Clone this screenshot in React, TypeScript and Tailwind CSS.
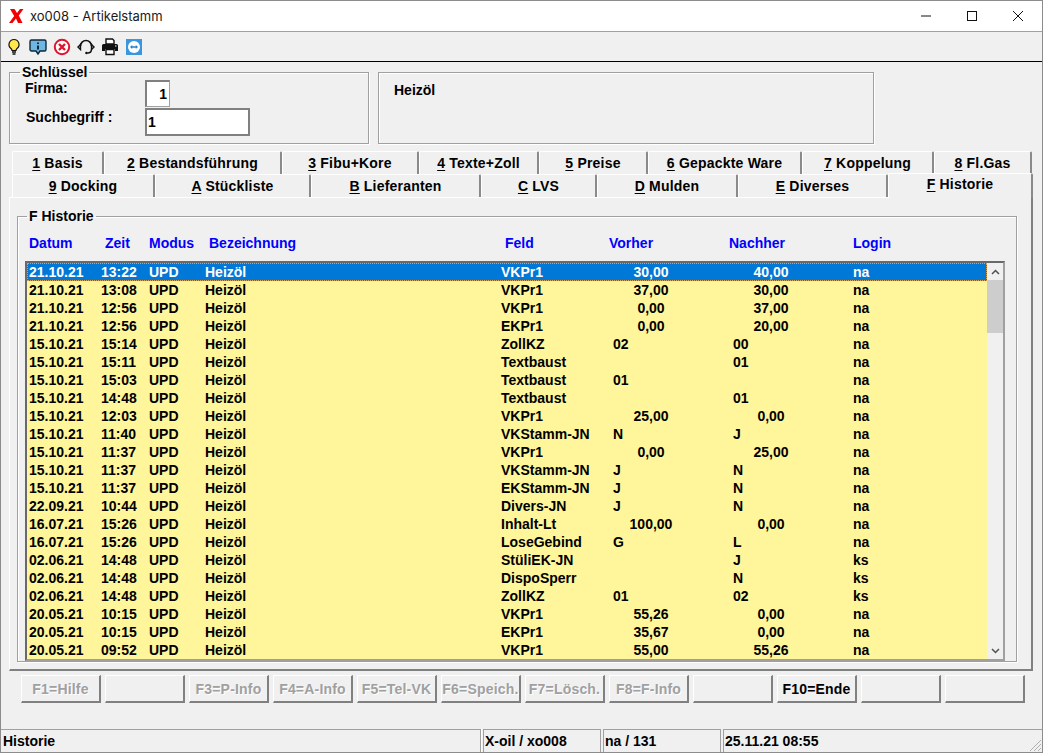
const rows = [
  ['21.10.21', '13:22', 'UPD', 'Heizöl', 'VKPr1', '30,00', '40,00', 'na'],
  ['21.10.21', '13:08', 'UPD', 'Heizöl', 'VKPr1', '37,00', '30,00', 'na'],
  ['21.10.21', '12:56', 'UPD', 'Heizöl', 'VKPr1', '0,00', '37,00', 'na'],
  ['21.10.21', '12:56', 'UPD', 'Heizöl', 'EKPr1', '0,00', '20,00', 'na'],
  ['15.10.21', '15:14', 'UPD', 'Heizöl', 'ZollKZ', '02', '00', 'na'],
  ['15.10.21', '15:11', 'UPD', 'Heizöl', 'Textbaust', '', '01', 'na'],
  ['15.10.21', '15:03', 'UPD', 'Heizöl', 'Textbaust', '01', '', 'na'],
  ['15.10.21', '14:48', 'UPD', 'Heizöl', 'Textbaust', '', '01', 'na'],
  ['15.10.21', '12:03', 'UPD', 'Heizöl', 'VKPr1', '25,00', '0,00', 'na'],
  ['15.10.21', '11:40', 'UPD', 'Heizöl', 'VKStamm-JN', 'N', 'J', 'na'],
  ['15.10.21', '11:37', 'UPD', 'Heizöl', 'VKPr1', '0,00', '25,00', 'na'],
  ['15.10.21', '11:37', 'UPD', 'Heizöl', 'VKStamm-JN', 'J', 'N', 'na'],
  ['15.10.21', '11:37', 'UPD', 'Heizöl', 'EKStamm-JN', 'J', 'N', 'na'],
  ['22.09.21', '10:44', 'UPD', 'Heizöl', 'Divers-JN', 'J', 'N', 'na'],
  ['16.07.21', '15:26', 'UPD', 'Heizöl', 'Inhalt-Lt', '100,00', '0,00', 'na'],
  ['16.07.21', '15:26', 'UPD', 'Heizöl', 'LoseGebind', 'G', 'L', 'na'],
  ['02.06.21', '14:48', 'UPD', 'Heizöl', 'StüliEK-JN', '', 'J', 'ks'],
  ['02.06.21', '14:48', 'UPD', 'Heizöl', 'DispoSperr', '', 'N', 'ks'],
  ['02.06.21', '14:48', 'UPD', 'Heizöl', 'ZollKZ', '01', '02', 'ks'],
  ['20.05.21', '10:15', 'UPD', 'Heizöl', 'VKPr1', '55,26', '0,00', 'na'],
  ['20.05.21', '10:15', 'UPD', 'Heizöl', 'EKPr1', '35,67', '0,00', 'na'],
  ['20.05.21', '09:52', 'UPD', 'Heizöl', 'VKPr1', '55,00', '55,26', 'na'],
];

const tabsTop = [
  { key: '1', label: 'Basis', w: 'w-[92px]' },
  { key: '2', label: 'Bestandsführung', w: 'w-[178px]' },
  { key: '3', label: 'Fibu+Kore', w: 'w-[137px]' },
  { key: '4', label: 'Texte+Zoll', w: 'w-[120px]' },
  { key: '5', label: 'Preise', w: 'w-[109px]' },
  { key: '6', label: 'Gepackte Ware', w: 'w-[154px]' },
  { key: '7', label: 'Koppelung', w: 'w-[132px]' },
  { key: '8', label: 'Fl.Gas', w: 'w-[98px]' },
];

const tabsBottom = [
  { key: '9', label: 'Docking', w: 'w-[143px]' },
  { key: 'A', label: 'Stückliste', w: 'w-[156px]' },
  { key: 'B', label: 'Lieferanten', w: 'w-[170px]' },
  { key: 'C', label: 'LVS', w: 'w-[116px]' },
  { key: 'D', label: 'Mulden', w: 'w-[141px]' },
  { key: 'E', label: 'Diverses', w: 'w-[150px]' },
];

const buttons = [
  { label: 'F1=Hilfe' },
  { label: '' },
  { label: 'F3=P-Info' },
  { label: 'F4=A-Info' },
  { label: 'F5=Tel-VK' },
  { label: 'F6=Speich.' },
  { label: 'F7=Lösch.' },
  { label: 'F8=F-Info' },
  { label: '' },
  { label: 'F10=Ende', active: true },
  { label: '' },
  { label: '' },
];

function Tab({ tab }: { tab: { key: string; label: string; w: string } }) {
  return (
    <div className={`${tab.w} h-full shrink-0 flex items-center justify-center bg-[#f0f0f0] border-t border-l border-white border-r-2 border-r-[#8a8a8a] rounded-t-[2px]`}>
      <span className="tracking-[0.2px]">
        <span className="underline underline-offset-2">{tab.key}</span> {tab.label}
      </span>
    </div>
  );
}

function ValueCell({ value }: { value: string }) {
  // Betraege stehen mittig, Kennzeichen linksbuendig
  if (value.includes(',')) return <div className="w-[84px] text-center">{value}</div>;
  return <div className="pl-[4px]">{value}</div>;
}

function ToolbarIcons() {
  return (
    <div className="flex items-center gap-[6px] pl-[4px]">
      <svg width="18" height="18" viewBox="0 0 18 18">
        <path d="M9 1.5a5 5 0 0 0-3 9c.7.6 1 1.2 1 2h4c0-.8.3-1.4 1-2a5 5 0 0 0-3-9z" fill="#ffe84d" stroke="#111" strokeWidth="1.2" />
        <path d="M7 14h4M7.5 16h3" stroke="#111" strokeWidth="1.4" />
      </svg>
      <svg width="18" height="18" viewBox="0 0 18 18">
        <path d="M2.5 2h13a1.5 1.5 0 0 1 1.5 1.5v8a1.5 1.5 0 0 1-1.5 1.5H11l-2 3-2-3H2.5A1.5 1.5 0 0 1 1 11.500v-8A1.500 1.500 0 0 1 2.500 2z" fill="#6fb7e3" stroke="#10283c" strokeWidth="1.400" />
        <path d="M9 4.500v1.500M9 7.500v4" stroke="#10283c" strokeWidth="2" />
      </svg>
      <svg width="18" height="18" viewBox="0 0 18 18">
        <circle cx="9" cy="9" r="7.200" fill="#fff" stroke="#e0122c" strokeWidth="2" />
        <path d="M6 6l6 6M12 6l-6 6" stroke="#e0122c" strokeWidth="2.400" />
      </svg>
      <svg width="18" height="18" viewBox="0 0 18 18" fill="none">
        <path d="M3.500 8a5.500 5.500 0 0 1 11 0" stroke="#111" strokeWidth="1.600" />
        <path d="M3.500 6.500L1 9l2.500 2.500zM14.500 6.500L17 9l-2.500 2.500z" fill="#fff" stroke="#111" strokeWidth="1.400" />
        <path d="M14.500 11.500c0 2.500-2 3.500-4 3.500" stroke="#111" strokeWidth="1.400" />
        <circle cx="9.500" cy="15" r="1.300" fill="#111" />
      </svg>
      <svg width="18" height="18" viewBox="0 0 18 18">
        <path d="M5 1h6.500L13 2.500V6H5z" fill="#fff" stroke="#111" strokeWidth="1.400" />
        <path d="M2.500 6h13A1.500 1.500 0 0 1 17 7.500V13h-3v-2H4v2H1V7.500A1.500 1.500 0 0 1 2.500 6z" fill="#111" />
        <path d="M5 11.500h8v5H5z" fill="#fff" stroke="#111" strokeWidth="1.400" />
        <path d="M14 8h1.500" stroke="#fff" strokeWidth="1" />
      </svg>
      <svg width="18" height="18" viewBox="0 0 18 18">
        <rect x="1" y="1" width="16" height="16" fill="#3a96dd" />
        <circle cx="9" cy="9" r="6" fill="#fff" />
        <path d="M5 9l2.200-2v1.200h3.600V7L13 9l-2.200 2V9.800H7.200V11z" fill="#2b7fc4" />
      </svg>
    </div>
  );
}

export default function App() {
  return (
    <div className="w-[1043px] h-[753px] flex flex-col overflow-hidden bg-[#f0f0f0] border border-[#8c8c8c] text-[14px] leading-[18px] font-bold text-black font-['Liberation_Sans',Arial,sans-serif]">
      {/* Titelleiste */}
      <div className="h-[31px] shrink-0 flex items-center bg-white border-b border-[#a0a0a0]">
        <svg width="16" height="16" viewBox="0 0 16 16" className="ml-[8px]">
          <path d="M1 1h4.500l2.500 4 3-4h3.500L9.800 7.500 13.500 15H9L7 10.500 3.500 15H0l5.200-7z" fill="#f00000" />
        </svg>
        <span className="ml-[5px] text-[13px] font-normal font-['Inter',sans-serif] text-[#1a1a1a]">xo008 - Artikelstamm</span>
        <div className="ml-auto flex items-center h-full">
          <div className="w-[46px] flex justify-center">
            <svg width="12" height="12" viewBox="0 0 12 12"><path d="M1 6h10" stroke="#111" strokeWidth="1" /></svg>
          </div>
          <div className="w-[46px] flex justify-center">
            <svg width="12" height="12" viewBox="0 0 12 12"><rect x="1.500" y="1.500" width="9" height="9" fill="none" stroke="#111" /></svg>
          </div>
          <div className="w-[46px] flex justify-center mr-[1px]">
            <svg width="12" height="12" viewBox="0 0 12 12"><path d="M1 1l10 10M11 1L1 11" stroke="#111" strokeWidth="1" /></svg>
          </div>
        </div>
      </div>

      {/* Werkzeugleiste */}
      <div className="h-[30px] shrink-0 flex items-center border-b border-black">
        <ToolbarIcons />
      </div>

      {/* Kopfbereich */}
      <div className="flex gap-[9px] pl-[8px] mt-[2px] shrink-0">
        <fieldset className="w-[360px] h-[80px] border border-[#a0a0a0] shadow-[inset_1px_1px_0_#fff,1px_1px_0_#fff]">
          <legend className="ml-[10px] px-[2px] leading-[16px]">Schlüssel</legend>
          <div className="grid grid-cols-[120px_auto] items-start pl-[15px]">
            <div className="pt-[0px] leading-[16px]">Firma:</div>
            <div className="w-[25px] h-[27px] bg-white border-t-2 border-l-2 border-[#808080] border-r border-b border-r-[#a0a0a0] border-b-[#a0a0a0] text-right pr-[2px] pt-[3px]">1</div>
            <div className="pl-[1px] mt-[1px] leading-[16px] pt-[1px]">Suchbegriff :</div>
            <div className="w-[105px] h-[28px] mt-[1px] bg-white border-2 border-[#808080] pl-[1px] pt-[3px]">1</div>
          </div>
        </fieldset>
        <div className="w-[496px] h-[72px] self-end border border-[#a0a0a0] shadow-[inset_1px_1px_0_#fff,1px_1px_0_#fff] pl-[15px] pt-[8px]">Heizöl</div>
      </div>

      {/* Registerkarten */}
      <div className="flex h-[23px] pl-[11px] mt-[7px] shrink-0 items-stretch">
        {tabsTop.map((t) => (
          <Tab key={t.key} tab={t} />
        ))}
      </div>
      <div className="flex h-[23px] pl-[11px] shrink-0 items-stretch relative z-10">
        {tabsBottom.map((t) => (
          <Tab key={t.key} tab={t} />
        ))}
        <div className="w-[145px] h-[25px] -mt-[1px] shrink-0 flex items-start justify-center pt-[1px] bg-[#f0f0f0] border-t border-l border-white border-r-2 border-r-[#8a8a8a] rounded-t-[2px]">
          <span className="tracking-[0.2px]">
            <span className="underline underline-offset-2">F</span> Historie
          </span>
        </div>
      </div>

      {/* Panel */}
      <div className="ml-[8px] w-[1024px] h-[474px] shrink-0 border-t border-l border-white border-r-2 border-b-2 border-r-[#808080] border-b-[#808080] pl-[7px] pt-[10px]">
        <fieldset className="w-[1000px] h-[454px] border border-[#a0a0a0] shadow-[inset_1px_1px_0_#fff,1px_1px_0_#fff]">
          <legend className="ml-[9px] px-[2px] leading-[16px]">F Historie</legend>
          <div className="ml-[11px] mt-[10px] h-[18px] grid grid-cols-[76px_44px_60px_296px_104px_120px_124px_1fr] text-[#0000ff]">
            <div>Datum</div>
            <div>Zeit</div>
            <div>Modus</div>
            <div>Bezeichnung</div>
            <div>Feld</div>
            <div>Vorher</div>
            <div>Nachher</div>
            <div>Login</div>
          </div>
          <div className="ml-[7px] mt-[9px] w-[980px] h-[400px] flex border-2 border-[#696969] border-r-[#a0a0a0] border-b-[#a0a0a0] bg-[#f0f0f0]">
            <div className="w-[960px] shrink-0 bg-[#fff69b]">
              {rows.map((r, i) => (
                <div
                  key={i}
                  className={`h-[18px] pl-[2px] grid grid-cols-[72px_48px_56px_296px_108px_120px_124px_1fr] ${
                    i === 0 ? 'bg-[#0078d7] text-white outline-1 -outline-offset-1 outline-dotted outline-[#d9a050]' : ''
                  }`}
                >
                  <div>{r[0]}</div>
                  <div>{r[1]}</div>
                  <div>{r[2]}</div>
                  <div>{r[3]}</div>
                  <div>{r[4]}</div>
                  <ValueCell value={r[5]} />
                  <ValueCell value={r[6]} />
                  <div>{r[7]}</div>
                </div>
              ))}
            </div>
            <div className="flex-1 flex flex-col items-center bg-[#f0f0f0]">
              <div className="h-[17px] flex items-center">
                <svg width="9" height="6" viewBox="0 0 9 6" fill="none"><path d="M1 5l3.500-3.500L8 5" stroke="#505050" strokeWidth="1.500" /></svg>
              </div>
              <div className="w-full h-[53px] bg-[#cdcdcd]" />
              <div className="mt-auto h-[17px] flex items-center">
                <svg width="9" height="6" viewBox="0 0 9 6" fill="none"><path d="M1 1l3.500 3.500L8 1" stroke="#505050" strokeWidth="1.500" /></svg>
              </div>
            </div>
          </div>
        </fieldset>
      </div>

      {/* Funktionstasten */}
      <div className="flex gap-[4px] pl-[20px] mt-[4px] shrink-0">
        {buttons.map((b, i) => (
          <div
            key={i}
            className={`w-[80px] h-[28px] flex items-center justify-center whitespace-nowrap tracking-[0.2px] bg-[#f0f0f0] border-t border-l border-white border-r-2 border-b-2 border-r-[#808080] border-b-[#808080] ${
              b.active ? 'text-black' : 'text-[#a0a0a0] [text-shadow:1px_1px_0_#fff]'
            }`}
          >
            {b.label}
          </div>
        ))}
      </div>

      {/* Statusleiste */}
      <div className="mt-auto h-[23px] shrink-0 flex gap-[2px]">
        <div className="w-[480px] border-t border-[#a0a0a0] border-r pl-[2px] pt-[2px] shadow-[1px_0_0_#fff]">Historie</div>
        <div className="w-[118px] border-t border-l border-r border-[#a0a0a0] pl-[1px] pt-[2px]">X-oil / xo008</div>
        <div className="w-[118px] border-t border-l border-r border-[#a0a0a0] pl-[1px] pt-[2px]">na / 131</div>
        <div className="flex-1 border-t border-l border-[#a0a0a0] pl-[1px] pt-[2px] flex justify-between">
          <span>25.11.21 08:55</span>
          <svg width="14" height="14" viewBox="0 0 14 14" className="self-end" fill="none">
            <path d="M13 2L2 13M13 6l-7 7M13 10l-3 3" stroke="#b0b0b0" />
          </svg>
        </div>
      </div>
    </div>
  );
}
